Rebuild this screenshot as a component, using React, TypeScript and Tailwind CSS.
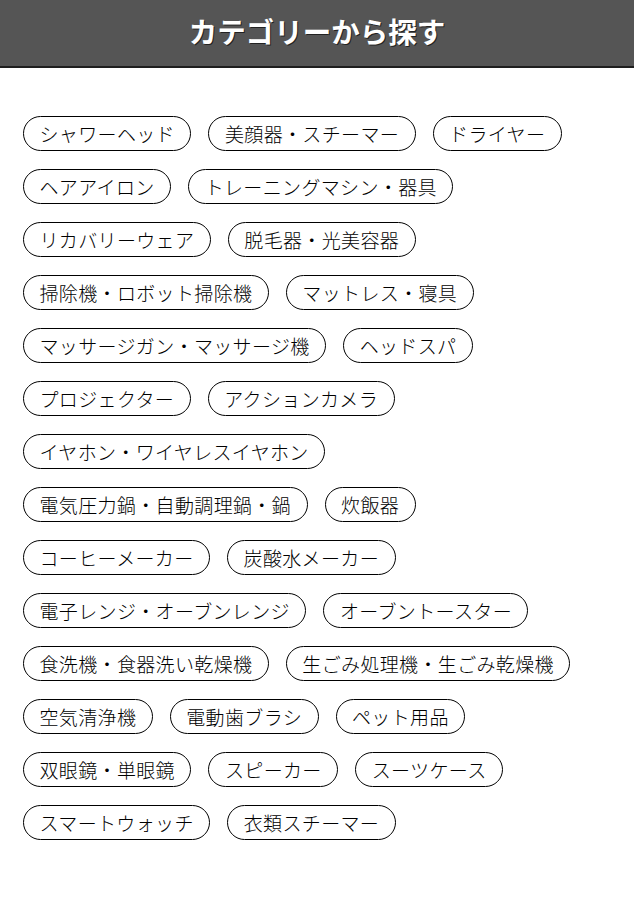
const categories = [
  "シャワーヘッド",
  "美顔器・スチーマー",
  "ドライヤー",
  "ヘアアイロン",
  "トレーニングマシン・器具",
  "リカバリーウェア",
  "脱毛器・光美容器",
  "掃除機・ロボット掃除機",
  "マットレス・寝具",
  "マッサージガン・マッサージ機",
  "ヘッドスパ",
  "プロジェクター",
  "アクションカメラ",
  "イヤホン・ワイヤレスイヤホン",
  "電気圧力鍋・自動調理鍋・鍋",
  "炊飯器",
  "コーヒーメーカー",
  "炭酸水メーカー",
  "電子レンジ・オーブンレンジ",
  "オーブントースター",
  "食洗機・食器洗い乾燥機",
  "生ごみ処理機・生ごみ乾燥機",
  "空気清浄機",
  "電動歯ブラシ",
  "ペット用品",
  "双眼鏡・単眼鏡",
  "スピーカー",
  "スーツケース",
  "スマートウォッチ",
  "衣類スチーマー",
];

export default function App() {
  return (
    <div className="min-h-screen bg-white font-['Noto_Sans_CJK_JP',sans-serif] text-black">
      <header className="flex h-[68px] items-center justify-center border-b-2 border-[#1e1e1e] bg-[#555555] pb-[3px]">
        <h1 className="text-[28.5px] font-bold leading-none text-white [text-shadow:1px_1px_0_#222]">
          カテゴリーから探す
        </h1>
      </header>
      <ul className="flex flex-wrap gap-x-[17px] gap-y-[18px] px-[23px] pt-[48px]">
        {categories.map((c) => (
          <li
            key={c}
            className="flex h-[35px] items-center rounded-full border-[1.5px] border-black px-[15.5px] text-[19px] font-light leading-none tracking-[0.35px] whitespace-nowrap"
          >
            {c}
          </li>
        ))}
      </ul>
    </div>
  );
}
